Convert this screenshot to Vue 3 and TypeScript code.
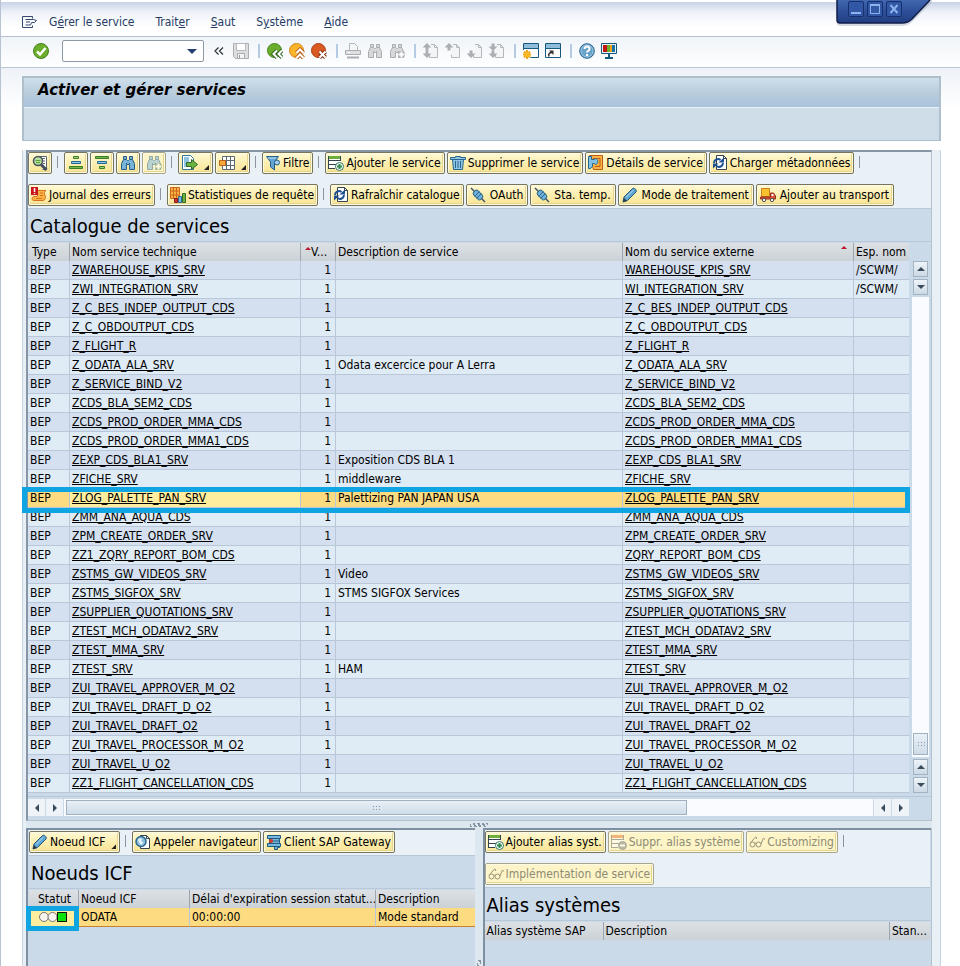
<script setup lang="ts">
import { ref } from 'vue'

interface Tool {
  icon?: string
  label?: string
  title?: string
  sep?: boolean
  off?: boolean
  menu?: boolean
  roomy?: boolean
}

interface Service {
  tech: string
  ext: string
  desc?: string
  ns?: string
}

const doc = '<path d="M5.500 1.500h6l3 3v10h-9z" fill="#fff" stroke="#35434f"/><path d="M11.500 1.500v3h3" fill="none" stroke="#35434f"/>'
const greyDoc = '<path d="M8 1.500h3.500l3 3v10h-8v-3" fill="#f4f5f7" stroke="#b4b7bb"/><path d="M11.500 1.500v3h3" fill="none" stroke="#b4b7bb"/>'
const up = (y: number): string => `<path d="M4 ${y}l4.500 4.500H5.500v3h-3v-3H-.5z" fill="#abaeb2"/>`
const down = (y: number): string => `<path d="M4 ${y}l4.500-4.500H5.500v-3h-3v3H-.5z" fill="#abaeb2"/>`
const binoculars = (fill: string, line: string): string =>
  `<path d="M3.500 1.500h3v3l1 1h1l1-1v-3h3v3l2 4v6h-5v-5h-3v5h-5v-6l2-4z" fill="${fill}" stroke="${line}"/><path d="M3.500 4.500h3M9.500 4.500h3M6.500 8v1.500M9.500 8v1.500" stroke="${line}"/>`
const list = (bar: string, line: string): string =>
  `<path d="M.500 1.500h12v12H.500z" fill="#fff"/><path d="M0 2.500h13" stroke="${bar}" stroke-width="3"/><path d="M.500 1v13M12.500 1v5M0 5.500h13M0 9.500h8M0 13.500h7" stroke="${line}" fill="none"/>`
const refresh =
  '<path d="M4.500.500h7l3 3v11h-10z" fill="#fff" stroke="#35434f"/><path d="M11.500.500v3h3" fill="none" stroke="#35434f"/>' +
  '<path d="M2 8a4 4 0 0 1 6.500-3M11 8a4 4 0 0 1-6.500 3" fill="none" stroke="#1d4f91" stroke-width="2"/><path d="M6.500 7.500H12V2.500zM6.500 8.500H1v5z" fill="#1d4f91"/>'
const plug =
  '<path d="M1 1l4 4M11 11l4 4" stroke="#3d5568" stroke-width="1.500"/><rect x="3" y="5" width="10" height="6" rx="2" transform="rotate(45 8 8)" fill="#6eb1dc" stroke="#2b6488"/><path d="M9.500 4.500l-5 5M11.500 6.500l-5 5" stroke="#2b6488"/>'
const glasses =
  '<g fill="none" stroke="#3a372c"><circle cx="3.500" cy="10.500" r="2.500"/><circle cx="9.500" cy="10.500" r="2.500"/><path d="M1.500 9L6 3.500c1-1 2 0 1.500 1.500M6 9.500c.5-.7 1-.7 1.500 0M12 10l2-5c.5-1.500 1.500-1 1.500.5"/></g>'
const pencil =
  '<path d="M1 15l1-5L10.500 1.500c1.500-1.500 5 2 3.500 3.500L5.500 13.500z" fill="#5ea6d2" stroke="#2a5878"/><path d="M4 10.500L11 3.500" stroke="#b9def3"/><path d="M1 15l1-4 3 3z" fill="#283b49"/>'

const icons: Record<string, string> = {
  menu: '<path d="M11.500 4.500v-2h-10v11h10v-2" fill="none" stroke="#34486f"/><path d="M4.500 5.500h8l3 1-2 2h-3l-1 2.500h-5M5 8h4" fill="none" stroke="#34486f"/>',
  ok: '<circle cx="8" cy="8" r="7.500" fill="#6bae2c" stroke="#478321"/><path d="M4 8.500L7 11.500 12.500 5" fill="none" stroke="#fff" stroke-width="2.500"/>',
  save: '<path d="M.500.500h15v15h-13l-2-2z" fill="#dcdee0" stroke="#aaadb1"/><path d="M3.500.500h9v7h-9z" fill="#fff" stroke="#b5b8bc"/><path d="M4.500 10.500h7v5h-7z" fill="#f4f5f6" stroke="#aaadb1"/><path d="M6.500 12v3" stroke="#999"/>',
  back: '<circle cx="7.500" cy="7.500" r="7" fill="#6bae2c" stroke="#478321"/><path d="M10 7.500L6.500 11 10 14.500M15 7.500L11.500 11 15 14.500" fill="none" stroke="#2f6420" stroke-width="4"/><path d="M10 7.500L6.500 11 10 14.500M15 7.500L11.500 11 15 14.500" fill="none" stroke="#fff" stroke-width="2"/>',
  exit: '<circle cx="7.500" cy="7.500" r="7" fill="#fbb52b" stroke="#d48518"/><path d="M7.500 10L11 6.500l3.500 3.500M7.500 15l3.500-3.500 3.500 3.500" fill="none" stroke="#b8641e" stroke-width="4"/><path d="M7.500 10L11 6.500l3.500 3.500M7.500 15l3.500-3.500 3.500 3.500" fill="none" stroke="#fff" stroke-width="2"/>',
  cancel: '<circle cx="7.500" cy="7.500" r="7" fill="#d95a21" stroke="#ab3e18"/><path d="M8.500 8.500l6 6M14.500 8.500l-6 6" stroke="#8d2f12" stroke-width="4"/><path d="M8.500 8.500l6 6M14.500 8.500l-6 6" stroke="#fff" stroke-width="2"/>',
  print: '<path d="M4.500 7V.500h5l3 3V7" fill="#f5f6f7" stroke="#b4b7bb"/><path d="M.500 7.500h15v4H.500z" fill="#dddfe1" stroke="#aaadb1"/><path d="M3 9.500h2" stroke="#fff"/><path d="M2 14.500h12" stroke="#aaadb1" stroke-width="2"/>',
  find: binoculars('#d6d8da', '#aaadb1'),
  findNext: binoculars('#d6d8da', '#aaadb1') + '<path d="M9 11.500h7M12.500 8v7" stroke="#aaadb1" stroke-width="4"/><path d="M9.500 11.500h6M12.500 8.500v6" stroke="#fff" stroke-width="2"/>',
  first: greyDoc + up(0) + down(15),
  prev: greyDoc + up(0),
  next: greyDoc + down(15),
  last: greyDoc + down(8) + down(15),
  session: '<path d="M.500.500h15v14H.500z" fill="#fff" stroke="#17597f"/><path d="M1 1h14v4H1z" fill="#8fbcda"/><path d="M.500 5.500h15" stroke="#17597f"/><path d="M-.5 7h8v9h-8z" fill="#fff"/><path d="M4 7v9M0 11.500h8M1 8.500l6 6M7 8.500l-6 6" stroke="#f0a51f" stroke-width="2"/><circle cx="4" cy="11.500" r="2.500" fill="#f9b91f"/>',
  shortcut: '<path d="M.500.500h15v14H.500z" fill="#fff" stroke="#17597f"/><path d="M1 1h14v4H1z" fill="#8fbcda"/><path d="M.500 5.500h15" stroke="#17597f"/><path d="M4 13.500c-1-3 1-4 3-4" fill="none" stroke="#333" stroke-width="1.500"/><path d="M4 7.500h4.500V12z" fill="#333"/>',
  help: '<circle cx="8" cy="8" r="7.300" fill="#6aa3ca" stroke="#24648d"/><circle cx="8" cy="8" r="6" fill="none" stroke="#9cc6e0"/><path d="M5.500 6c0-3.500 5.500-3 5 0 0 2-2.500 1.800-2.500 3.500M8 11v2" fill="none" stroke="#fff" stroke-width="2"/>',
  monitor: '<path d="M.500.500h15v10H.500z" fill="#e9f4fb" stroke="#17597f"/><path d="M2 2h4v7H2z" fill="#c41515"/><path d="M6 2h3v7H6z" fill="#6fae2e"/><path d="M9 2h2v7H9z" fill="#f6a519"/><path d="M11 2h3v7h-3z" fill="#1873a8"/><path d="M8 11v4M4 15h8" stroke="#17597f" stroke-width="2"/>',
  detail: '<path d="M7.500 1.500h7v13h-4" fill="#fff" stroke="#59646d"/><path d="M10 3.500h3M11 6h2M11 8.500h2" stroke="#59646d"/><circle cx="6" cy="6" r="4.500" fill="#b9dca0" stroke="#43505a" stroke-width="1.500"/><path d="M3.500 5.500h5M4 7.500h4" stroke="#58a03a"/><path d="M9 9.500l5.500 5.500" stroke="#43505a" stroke-width="3"/>',
  asc: '<path d="M5.500 1.500h5v2h-5z" fill="#9fd36d" stroke="#3b7c2d"/><path d="M3.500 6.500h9v2h-9z" fill="#8cc9ec" stroke="#226a95"/><path d="M1.500 11.500h13v2h-13z" fill="#74b844" stroke="#3b7c2d"/>',
  desc: '<path d="M1.500 1.500h13v2h-13z" fill="#74b844" stroke="#3b7c2d"/><path d="M3.500 6.500h9v2h-9z" fill="#8cc9ec" stroke="#226a95"/><path d="M5.500 11.500h5v2h-5z" fill="#9fd36d" stroke="#3b7c2d"/>',
  look: binoculars('#79b3da', '#285f86'),
  lookNext: binoculars('#79b3da', '#285f86') + '<path d="M9 11.500h7M12.500 8v7" stroke="#4d7d55" stroke-width="4"/><path d="M9.500 11.500h6M12.500 8.500v6" stroke="#fff" stroke-width="2"/>',
  export: '<path d="M.500.500h8l3 3v11h-11z" fill="#fff" stroke="#34759b"/><path d="M2 2h5v10H2z" fill="#8fc4e2"/><path d="M4.500 7.500h5v-3l6 5-6 5v-3h-5z" fill="#6db33f" stroke="#2f6b27"/>',
  layout: '<path d="M3.500 1.500h12v13h-12z" fill="#fff" stroke="#5e6a72"/><path d="M3.500 5.500h12M3.500 10.500h12M7.500 1.500v13M11.500 1.500v13" stroke="#5e6a72"/><path d="M.500 5.500h6v5h-6z" fill="#f9a63a" stroke="#b9651b"/>',
  filter: '<path d="M1.500 1.500h12L9.500 7v8l-4-3V7z" fill="#63a6d3" stroke="#285f86"/><path d="M3 3h8" stroke="#bfe0f3"/><circle cx="12" cy="7.500" r="2.500" fill="#a7d0ea" stroke="#285f86"/>',
  add: list('#6fae3b', '#35434f') + '<circle cx="11.500" cy="11.500" r="4" fill="#fff" stroke="#2d7560"/><path d="M9 11.500h5M11.500 9v5" stroke="#2f8a4c" stroke-width="2"/>',
  remove: list('#e8742a', '#5f625f') + '<circle cx="11.500" cy="11.500" r="4" fill="#777b7d" stroke="#66696b"/><path d="M9 11.500h5" stroke="#fff" stroke-width="2"/>',
  trash: '<path d="M2.500 4.500l1 10h9l1-10z" fill="#8fc4e4" stroke="#28678e"/><path d="M.500 4.500v-2h5v-1h5v1h5v2z" fill="#8fc4e4" stroke="#28678e"/><path d="M5.500 6v7M8 6v7M10.500 6v7" stroke="#28678e"/>',
  puzzle: '<path d="M1.500.500h13v14h-9z" fill="#f9b540" stroke="#bd5a1b"/><path d="M5 3.500h7v8H7" fill="none" stroke="#bd5a1b"/><path d="M.500 1.500h3v3h3l1-1c3 0 3 6 0 6l-1-1h-2v3l-2 2H.500z" fill="#83c1e6" stroke="#28678e"/>',
  refresh,
  log: '<path d="M5 3.500h10c-2 1-2 3-1 5s0 5-2 5H3c-3 0-2-4 0-4h3c1 0 1-3 0-4z" fill="#fbb344" stroke="#d6721f"/><path d="M9 6h3M9 8.500h3M5 11.500h6" stroke="#d6721f"/><path d="M0 0h7v8H0z" fill="#c8141a"/><path d="M3.500 1v4M3.500 6v1" stroke="#fff" stroke-width="1.500"/>',
  stats: '<path d="M.500.500h9v11h-9z" fill="#f9b540" stroke="#cd651f"/><path d="M.500 4h9M.500 8h9M3.500.500v11M6.500.500v11" stroke="#cd651f"/><path d="M4.500 11.500h3v4h-3z" fill="#d23232" stroke="#8e1b1b"/><path d="M8.500 9.500h3v6h-3z" fill="#78b9e2" stroke="#28678e"/><path d="M12.500 6.500h3v9h-3z" fill="#6fae3b" stroke="#35702a"/>',
  plug,
  pencil,
  truck: '<path d="M1.500 1.500h8v8h-8z" fill="#fbc02d" stroke="#c9801b"/><path d="M.500 10v2h15V9l-2-3h-3v4z" fill="#d9553a" stroke="#962b1d"/><path d="M11.500 7h2v2h-2z" fill="#fff"/><circle cx="4" cy="13" r="1.700" fill="#eee" stroke="#555"/><circle cx="12" cy="13" r="1.700" fill="#eee" stroke="#555"/>',
  browser: doc + '<circle cx="6" cy="7.500" r="5" fill="#8ebedd" stroke="#2b678e" stroke-width="1.500"/><path d="M3 6c1-2 3-2 4-1l-1 2 2 1-1 3-2-1z" fill="#e5f3fb"/>',
  gateway: '<path d="M3.500 1.500h10v12h-2v2h-3v-4h-5z" fill="#79b8df" stroke="#1f5a80"/><path d="M1.500 1.500h13v3h-13zM1.500 9.500h13v3h-13z" fill="#79b8df" stroke="#1f5a80"/><path d="M5 7h8" stroke="#1f5a80"/><circle cx="5" cy="7" r="2" fill="#d33a2c"/>',
  glasses,
}

const menus: [string, string, string][] = [
  ['G', 'é', 'rer le service'],
  ['Trait', 'e', 'r'],
  ['', 'S', 'aut'],
  ['S', 'y', 'stème'],
  ['', 'A', 'ide'],
]

const systemTools: Tool[] = [
  { icon: 'back', title: 'Retour' },
  { icon: 'exit', title: 'Terminer' },
  { icon: 'cancel', title: 'Interrompre' },
  { sep: true },
  { icon: 'print', title: 'Imprimer', off: true },
  { icon: 'find', title: 'Rechercher', off: true },
  { icon: 'findNext', title: 'Poursuivre la recherche', off: true },
  { sep: true },
  { icon: 'first', title: 'Première page', off: true },
  { icon: 'prev', title: 'Page précédente', off: true },
  { icon: 'next', title: 'Page suivante', off: true },
  { icon: 'last', title: 'Dernière page', off: true },
  { sep: true },
  { icon: 'session', title: 'Nouveau mode' },
  { icon: 'shortcut', title: 'Créer un raccourci' },
  { sep: true },
  { icon: 'help', title: 'Aide' },
  { icon: 'monitor', title: 'Options' },
]

const catalogTools: Tool[][] = [
  [
    { icon: 'detail', title: 'Détail' },
    { sep: true },
    { icon: 'asc', title: 'Tri croissant' },
    { icon: 'desc', title: 'Tri décroissant' },
    { icon: 'look', title: 'Rechercher' },
    { icon: 'lookNext', title: 'Poursuivre la recherche', off: true },
    { sep: true },
    { icon: 'export', title: 'Exporter', menu: true },
    { icon: 'layout', title: 'Mise en forme', menu: true },
    { sep: true },
    { icon: 'filter', label: 'Filtre' },
    { sep: true },
    { icon: 'add', label: 'Ajouter le service' },
    { icon: 'trash', label: 'Supprimer le service' },
    { icon: 'puzzle', label: 'Détails de service' },
    { icon: 'refresh', label: 'Charger métadonnées' },
    { sep: true },
  ],
  [
    { icon: 'log', label: 'Journal des erreurs' },
    { sep: true },
    { icon: 'stats', label: 'Statistiques de requête' },
    { sep: true },
    { icon: 'refresh', label: 'Rafraîchir catalogue' },
    { icon: 'plug', label: 'OAuth', roomy: true },
    { icon: 'plug', label: 'Sta. temp.', roomy: true },
    { icon: 'pencil', label: 'Mode de traitement', roomy: true },
    { icon: 'truck', label: 'Ajouter au transport', roomy: true },
  ],
]

const nodeTools: Tool[][] = [
  [
    { icon: 'pencil', label: 'Noeud ICF', menu: true },
    { sep: true },
    { icon: 'browser', label: 'Appeler navigateur' },
    { icon: 'gateway', label: 'Client SAP Gateway' },
  ],
]

const aliasTools: Tool[][] = [
  [
    { icon: 'add', label: 'Ajouter alias syst.' },
    { icon: 'remove', label: 'Suppr. alias système', off: true },
    { icon: 'glasses', label: 'Customizing', off: true },
    { sep: true },
  ],
  [{ icon: 'glasses', label: 'Implémentation de service', off: true }],
]

const same = (name: string, desc?: string): Service => ({ tech: name, ext: name, desc })

const services: Service[] = [
  { tech: 'ZWAREHOUSE_KPIS_SRV', ext: 'WAREHOUSE_KPIS_SRV', ns: '/SCWM/' },
  { tech: 'ZWI_INTEGRATION_SRV', ext: 'WI_INTEGRATION_SRV', ns: '/SCWM/' },
  same('Z_C_BES_INDEP_OUTPUT_CDS'),
  same('Z_C_OBDOUTPUT_CDS'),
  same('Z_FLIGHT_R'),
  same('Z_ODATA_ALA_SRV', 'Odata excercice pour A Lerra'),
  same('Z_SERVICE_BIND_V2'),
  same('ZCDS_BLA_SEM2_CDS'),
  same('ZCDS_PROD_ORDER_MMA_CDS'),
  same('ZCDS_PROD_ORDER_MMA1_CDS'),
  same('ZEXP_CDS_BLA1_SRV', 'Exposition CDS BLA 1'),
  same('ZFICHE_SRV', 'middleware'),
  same('ZLOG_PALETTE_PAN_SRV', 'Palettizing PAN JAPAN USA'),
  same('ZMM_ANA_AQUA_CDS'),
  same('ZPM_CREATE_ORDER_SRV'),
  { tech: 'ZZ1_ZQRY_REPORT_BOM_CDS', ext: 'ZQRY_REPORT_BOM_CDS' },
  same('ZSTMS_GW_VIDEOS_SRV', 'Video'),
  same('ZSTMS_SIGFOX_SRV', 'STMS SIGFOX Services'),
  same('ZSUPPLIER_QUOTATIONS_SRV'),
  same('ZTEST_MCH_ODATAV2_SRV'),
  same('ZTEST_MMA_SRV'),
  same('ZTEST_SRV', 'HAM'),
  same('ZUI_TRAVEL_APPROVER_M_O2'),
  same('ZUI_TRAVEL_DRAFT_D_O2'),
  same('ZUI_TRAVEL_DRAFT_O2'),
  same('ZUI_TRAVEL_PROCESSOR_M_O2'),
  same('ZUI_TRAVEL_U_O2'),
  same('ZZ1_FLIGHT_CANCELLATION_CDS'),
]

const selected = ref(12)
const command = ref('')
</script>

<template>
  <div class="window">
    <header class="menubar">
      <button class="plain" type="button" aria-label="Menu système">
        <svg class="ico" viewBox="0 0 16 16" v-html="icons.menu"></svg>
      </button>
      <nav class="menus">
        <a v-for="m in menus" :key="m.join('')" href="#">{{ m[0] }}<u>{{ m[1] }}</u>{{ m[2] }}</a>
      </nav>
      <div class="controls">
        <svg class="controls-shape" viewBox="0 0 96 27">
          <defs>
            <linearGradient id="tab" x1="0" y1="0" x2="0" y2="1">
              <stop offset="0" stop-color="#4167ae" />
              <stop offset="0.500" stop-color="#2e4f98" />
              <stop offset="1" stop-color="#213d80" />
            </linearGradient>
          </defs>
          <path d="M1 0v23q0 3 3 3h62q6 0 10-4L96 2V0z" fill="#9ba4b5" opacity=".4" />
          <path d="M1 0v20q0 3 3 3h62q6 0 10-4L94 0z" fill="url(#tab)" />
          <path d="M1 0v20q0 3 3 3h62q6 0 10-4L94 0" fill="none" stroke="#111d49" stroke-width="1.500" />
        </svg>
        <div class="controls-row">
          <button type="button" aria-label="Réduire"><svg viewBox="0 0 14 14"><path d="M2 11h10" stroke="#8db2ee" stroke-width="2" /></svg></button>
          <button type="button" aria-label="Agrandir"><svg viewBox="0 0 14 14"><path d="M2.500 3v8.500h9V3" fill="none" stroke="#8db2ee" /><path d="M2 3h10" stroke="#8db2ee" stroke-width="2" /></svg></button>
          <button type="button" aria-label="Fermer"><svg viewBox="0 0 14 14"><path d="M3.500 3l7 8M10.500 3l-7 8" stroke="#8db2ee" stroke-width="2" /></svg></button>
        </div>
      </div>
    </header>

    <div class="sysbar">
      <button class="plain" type="button" aria-label="Valider">
        <svg class="ico" viewBox="0 0 16 16" v-html="icons.ok"></svg>
      </button>
      <div class="command">
        <input v-model="command" type="text" aria-label="Commande" />
        <svg class="arrow" viewBox="0 0 10 5"><path d="M0 0h10L5 5z" fill="#24406e" /></svg>
      </div>
      <button class="plain collapse" type="button" aria-label="Masquer la commande">
        <svg viewBox="0 0 10 8"><path d="M4.500.500L1 4l3.500 3.500M9 .500L5.500 4 9 7.500" fill="none" stroke="#33383f" stroke-width="1.300" /></svg>
      </button>
      <button class="plain" type="button" aria-label="Sauvegarder" disabled>
        <svg class="ico" viewBox="0 0 16 16" v-html="icons.save"></svg>
      </button>
      <span class="sys-sep"></span>
      <template v-for="(t, i) in systemTools" :key="i">
        <span v-if="t.sep" class="sys-sep"></span>
        <button v-else class="plain" type="button" :aria-label="t.title" :disabled="t.off">
          <svg class="ico" viewBox="0 0 16 16" v-html="icons[t.icon!]"></svg>
        </button>
      </template>
    </div>

    <main class="work">
      <div class="heading">
        <h1>Activer et gérer services</h1>
        <div class="appbar"></div>
      </div>

      <div class="content">
        <section class="panel catalog">
          <div class="toolbar">
            <div v-for="(line, r) in catalogTools" :key="r" class="tools">
              <template v-for="(t, i) in line" :key="i">
                <span v-if="t.sep" class="sep"></span>
                <button v-else class="btn" :class="{ split: t.menu, lone: !t.label, roomy: t.roomy }" type="button" :aria-label="t.title" :disabled="t.off">
                  <svg class="ico" viewBox="0 0 16 16" v-html="icons[t.icon!]"></svg>
                  <span v-if="t.label">{{ t.label }}</span>
                  <i v-if="t.menu" class="corner"></i>
                </button>
              </template>
            </div>
          </div>
          <h2>Catalogue de services</h2>
          <div class="grid-area">
            <div class="table-box">
              <table>
                <colgroup>
                  <col class="w-type" /><col class="w-name" /><col class="w-ver" /><col /><col class="w-name" /><col class="w-ns" />
                </colgroup>
                <thead>
                  <tr>
                    <th class="indent">Type</th>
                    <th>Nom service technique</th>
                    <th class="sorted-left"><i class="sort"></i>V...</th>
                    <th>Description de service</th>
                    <th class="sorted">Nom du service externe<i class="sort"></i></th>
                    <th>Esp. nom</th>
                  </tr>
                </thead>
                <tbody>
                  <tr v-for="(s, i) in services" :key="s.tech" :class="{ picked: i === selected }" @click="selected = i">
                    <td>BEP</td>
                    <td class="tech"><a href="#">{{ s.tech }}</a></td>
                    <td class="num">1</td>
                    <td>{{ s.desc }}</td>
                    <td><a href="#">{{ s.ext }}</a></td>
                    <td>{{ s.ns }}<span v-if="i === selected" class="mark mark-row"></span></td>
                  </tr>
                </tbody>
              </table>
            </div>
            <div class="vscroll">
              <button type="button" aria-label="Début"><i class="tri up"></i></button>
              <button type="button" aria-label="Descendre"><i class="tri down"></i></button>
              <div class="vtrack"><div class="vthumb"><i class="dots"></i></div></div>
              <button type="button" aria-label="Monter"><i class="tri up"></i></button>
              <button type="button" aria-label="Fin"><i class="tri down"></i></button>
            </div>
          </div>
          <div class="hscroll">
            <button type="button" aria-label="Première colonne"><i class="tri left"></i></button>
            <button type="button" aria-label="Colonne suivante"><i class="tri right"></i></button>
            <div class="htrack"><div class="hthumb"><i class="dots"></i></div></div>
            <button type="button" aria-label="Colonne précédente"><i class="tri left"></i></button>
            <button type="button" aria-label="Dernière colonne"><i class="tri right"></i></button>
          </div>
        </section>

        <div class="hsplit"><i class="grip"></i></div>

        <div class="lower">
          <section class="panel nodes">
            <div class="toolbar">
              <div v-for="(line, r) in nodeTools" :key="r" class="tools">
                <template v-for="(t, i) in line" :key="i">
                  <span v-if="t.sep" class="sep"></span>
                  <button v-else class="btn" :class="{ split: t.menu }" type="button">
                    <svg class="ico" viewBox="0 0 16 16" v-html="icons[t.icon!]"></svg>
                    <span>{{ t.label }}</span>
                    <i v-if="t.menu" class="corner"></i>
                  </button>
                </template>
              </div>
            </div>
            <h2>Noeuds ICF</h2>
            <table>
              <colgroup><col class="w-status" /><col class="w-node" /><col class="w-delay" /><col /></colgroup>
              <thead>
                <tr>
                  <th class="status">Statut</th>
                  <th>Noeud ICF</th>
                  <th>Délai d'expiration session statut...</th>
                  <th>Description</th>
                </tr>
              </thead>
              <tbody>
                <tr class="picked framed">
                  <td class="status tech">
                    <svg class="lights" viewBox="0 0 30 12" role="img" aria-label="Actif">
                      <circle cx="6" cy="6" r="4.500" fill="#f6f4ec" stroke="#777" />
                      <circle cx="14.500" cy="6" r="4.500" fill="#f6f4ec" stroke="#777" />
                      <rect x="19.500" y="1.500" width="9" height="9" fill="#0be30b" stroke="#111" />
                    </svg>
                    <span class="mark mark-status"></span>
                  </td>
                  <td>ODATA</td>
                  <td>00:00:00</td>
                  <td>Mode standard</td>
                </tr>
              </tbody>
            </table>
          </section>
          <div class="vsplit"><i class="grip"></i></div>
          <section class="panel alias">
            <div class="toolbar">
              <div v-for="(line, r) in aliasTools" :key="r" class="tools">
                <template v-for="(t, i) in line" :key="i">
                  <span v-if="t.sep" class="sep"></span>
                  <button v-else class="btn" type="button" :disabled="t.off">
                    <svg class="ico" viewBox="0 0 16 16" v-html="icons[t.icon!]"></svg>
                    <span>{{ t.label }}</span>
                  </button>
                </template>
              </div>
            </div>
            <h2>Alias systèmes</h2>
            <table>
              <colgroup><col class="w-alias" /><col /><col class="w-std" /></colgroup>
              <thead>
                <tr>
                  <th>Alias système SAP</th>
                  <th>Description</th>
                  <th>Stan...</th>
                </tr>
              </thead>
            </table>
          </section>
        </div>
      </div>
    </main>
  </div>
</template>

<style>
body {
  margin: 0;
  background: #fff;
}
</style>

<style scoped>
* {
  box-sizing: border-box;
}
.window {
  display: flex;
  flex-direction: column;
  min-height: 100vh;
  border-left: 1px solid #b9c2d2;
  background: #fff;
  color: #000;
  font: 12px/16px 'DejaVu Sans Condensed', 'Noto Sans', sans-serif;
}
button {
  margin: 0;
  padding: 0;
  border: 0;
  background: none;
  font: inherit;
  color: inherit;
}
.ico {
  display: block;
  flex: none;
  width: 16px;
  height: 16px;
}
.plain {
  display: block;
  flex: none;
}

/* menu bar */
.menubar {
  position: relative;
  display: flex;
  align-items: center;
  gap: 12px;
  height: 37px;
  padding: 6px 20px 0;
  border-top: 2px solid #fff;
  border-bottom: 1px solid #b5c1cf;
  background: linear-gradient(#c9d3e7, #eef2f8 30%, #fff 75%);
}
.menus {
  display: flex;
  gap: 21px;
}
.menus a {
  color: #263c66;
  text-decoration: none;
}
.controls {
  position: absolute;
  top: -2px;
  right: 28px;
  width: 96px;
  height: 27px;
}
.controls-shape {
  position: absolute;
  inset: 0;
  width: 96px;
  height: 27px;
}
.controls-row {
  position: relative;
  display: flex;
  gap: 3px;
  padding: 1px 12px;
}
.controls-row button {
  width: 16px;
  height: 16px;
  border: 1px solid #172f6c;
  border-radius: 2px;
  background: #3258a5;
}
.controls-row svg {
  display: block;
  width: 14px;
  height: 14px;
}

/* system toolbar */
.sysbar {
  display: flex;
  align-items: center;
  gap: 6px;
  height: 31px;
  padding: 0 32px 2px;
  border-bottom: 1px solid #bcc7d4;
  background: linear-gradient(#eff4f9, #fff);
}
.command {
  display: flex;
  align-items: center;
  width: 142px;
  height: 22px;
  margin: 0 4px 0 7px;
  padding-right: 6px;
  border: 1px solid #8d99a6;
  border-radius: 2px;
  background: #fff;
}
.command input {
  flex: 1;
  min-width: 0;
  padding: 0 4px;
  border: 0;
  outline: 0;
  background: none;
  font: inherit;
}
.arrow {
  width: 10px;
  height: 5px;
}
.collapse {
  width: 13px;
}
.collapse svg {
  display: block;
  width: 10px;
  height: 8px;
}
.sys-sep {
  width: 3px;
  height: 14px;
  border-left: 2px solid #b5cbe3;
  margin-left: 3px;
}

/* work area */
.work {
  flex: 1;
  display: flex;
  flex-direction: column;
  gap: 9px;
  padding: 8px 19px 0 21px;
  background: linear-gradient(#eef2f8, #fff 40px);
}
.heading {
  border: 2px solid #b0bfcc;
  border-bottom-width: 1px;
  background: #cfdde8;
}
h1 {
  margin: 0;
  padding: 2px 14px 7px;
  border-bottom: 1px solid #edf4f9;
  background: linear-gradient(#cfdfec, #b9cddd 50%, #a9c2db);
  font: italic bold 15px/20px 'DejaVu Sans', 'Noto Sans', sans-serif;
}
.appbar {
  height: 32px;
}
.content {
  flex: 1;
  display: flex;
  flex-direction: column;
  padding: 0 8px 0 3px;
  border: solid #c9d5df;
  border-width: 0 1px;
  background: #e8eff5;
}
.panel {
  background: #cbdae8;
}
.catalog {
  border: solid #8696a7;
  border-width: 2px 1px 1px 2px;
  border-right-color: #b4c2cf;
  border-bottom-color: #b4c2cf;
}
.toolbar {
  display: flex;
  flex-direction: column;
  gap: 10px;
  padding: 0 0 2px;
  border-bottom: 1px solid #b8c8d8;
  background: #e9f0f6;
}
.tools {
  display: flex;
  gap: 2px;
}
.sep {
  width: 5px;
  height: 12px;
  margin: 4px 0 0 3px;
  border-left: 1px solid #8d969e;
}
.btn {
  position: relative;
  display: flex;
  align-items: center;
  gap: 2px;
  height: 22px;
  padding: 0 3px 0 2px;
  border: 1px solid #77745c;
  border-radius: 2px;
  background: linear-gradient(#fff9d5, #fbeeb0 50%, #f8e494);
  box-shadow: inset 0 0 0 1px #fffbe2, inset -1px -1px 0 1px #e6d58b;
  white-space: nowrap;
}
.btn.lone {
  padding: 0 3px;
}
.btn.roomy {
  gap: 4px;
  padding: 0 4px 0 3px;
}
.btn.split {
  padding-right: 14px;
}
.btn:disabled {
  border-color: #a8a58e;
  background: #fdf4c8;
  color: #8e8b74;
}
.btn:disabled .ico {
  opacity: 0.5;
}
.corner {
  position: absolute;
  right: 3px;
  bottom: 3px;
  width: 5px;
  height: 5px;
  background: #222;
  clip-path: polygon(100% 0, 100% 100%, 0 100%);
}
h2 {
  margin: 0;
  padding: 5px 2px 2px;
  border-bottom: 1px solid #b8c8d8;
  font-size: 20px;
  line-height: 25px;
  font-weight: normal;
}

/* tables */
table {
  width: 100%;
  table-layout: fixed;
  border-collapse: separate;
  border-spacing: 0;
}
th {
  height: 18px;
  padding: 0 0 0 2px;
  border-right: 1px solid #9ba6b0;
  background: linear-gradient(#dde1e5, #cbd1d6);
  font-weight: normal;
  text-align: left;
  white-space: nowrap;
  overflow: hidden;
  line-height: 18px;
}
th:last-child,
td:last-child {
  border-right: 0;
}
td {
  height: 19px;
  padding: 0 2px;
  border: solid #b9c7d8;
  border-width: 0 1px 1px 0;
  line-height: 18px;
  white-space: nowrap;
}
tbody tr {
  position: relative;
  background: #dfebf5;
}
tbody tr:nth-child(odd) {
  background: #d4dfef;
}
tbody tr.picked {
  background: #fddb80;
}
.picked .tech {
  background: #ffee9e;
}
td a {
  color: #000;
  text-decoration: underline;
}
.indent {
  padding-left: 4px;
}
.num {
  padding-right: 4px;
  text-align: right;
}
.sort {
  display: inline-block;
  border: solid transparent;
  border-width: 0 3px 3px;
  border-bottom-color: #b8172d;
  vertical-align: 6px;
}
.sorted-left {
  padding-left: 4px;
}
.sorted .sort {
  float: right;
  margin: 3px 6px 0 0;
}
.w-type { width: 42px; }
.w-name { width: 231px; }
.w-ver { width: 35px; }
.w-ns { width: 55px; }
.w-status { width: 50px; }
.w-node { width: 111px; }
.w-delay { width: 186px; }
.w-alias { width: 119px; }
.w-std { width: 40px; }

.mark {
  position: absolute;
  border: 5px solid #0ea5e2;
  pointer-events: none;
  z-index: 1;
}
.mark-row {
  inset: -2px -1px -5px -6px;
}
.mark-status {
  top: -2px;
  left: -3px;
  width: 53px;
  height: 25px;
}

/* scrolling */
.grid-area {
  display: flex;
  gap: 3px;
  padding: 1px 2px 3px 0;
  border-bottom: 1px solid #b8c8d8;
}
.table-box {
  flex: 1;
  min-width: 0;
}
.vscroll {
  display: flex;
  flex-direction: column;
  gap: 2px;
  width: 17px;
  padding: 18px 0 0;
}
.vscroll button {
  display: flex;
  align-items: center;
  justify-content: center;
  height: 16px;
  margin: 0 1px;
  border: 1px solid #a3b3c2;
  background: linear-gradient(#eef4f9, #ccd9e4);
}
.vtrack {
  flex: 1;
  display: flex;
  flex-direction: column;
  justify-content: flex-end;
  padding: 0 1px 2px;
  background: #fafbfe;
}
.vthumb,
.hthumb {
  display: flex;
  align-items: center;
  justify-content: center;
  border: 1px solid #9fb0c0;
  background: linear-gradient(#e9f0f6, #cfdce8);
}
.vthumb {
  height: 22px;
}
.dots {
  width: 8px;
  height: 6px;
  background: radial-gradient(circle, #8798a8 1px, transparent 1px) 0 0 / 3px 3px;
}
.tri {
  border: 4px solid transparent;
}
.up { border-top: 0; border-bottom-color: #3a4c5c; }
.down { border-bottom: 0; border-top-color: #3a4c5c; }
.left { border-left: 0; border-right-color: #3a4c5c; }
.right { border-right: 0; border-left-color: #3a4c5c; }
.hscroll {
  display: flex;
  gap: 1px;
  height: 23px;
  padding: 2px 22px 4px 0;
}
.hscroll button {
  display: flex;
  align-items: center;
  justify-content: center;
  width: 17px;
  background: #eef3f8;
}
.htrack {
  flex: 1;
  display: flex;
  padding: 1px 1px 1px 2px;
  background: #fafbfe;
}
.hthumb {
  width: 77%;
}

/* split panes */
.hsplit,
.vsplit {
  display: flex;
  justify-content: center;
  background: #dde7ef;
}
.hsplit {
  height: 7px;
  align-items: center;
}
.grip {
  width: 18px;
  height: 4px;
  background: repeating-linear-gradient(60deg, #8595a4 0 2px, transparent 2px 4px);
}
.lower {
  flex: 1;
  display: flex;
  border-right: 1px solid #b4c2cf;
}
.nodes,
.alias {
  flex: 1 1 0;
  min-width: 0;
  border: solid #7d8fa0;
  border-width: 2px 0 0 2px;
}
.nodes {
  padding-left: 1px;
}
.alias {
  padding-right: 1px;
}
.lower .toolbar {
  padding-top: 1px;
}
.lower table {
  padding-top: 1px;
}
.vsplit {
  width: 8px;
  align-items: flex-end;
}
.vsplit .grip {
  width: 4px;
  height: 6px;
}
.status {
  padding-left: 9px;
}
.framed td {
  border-bottom-color: #c9802f;
}
.lights {
  display: block;
  width: 30px;
  height: 12px;
}
</style>
